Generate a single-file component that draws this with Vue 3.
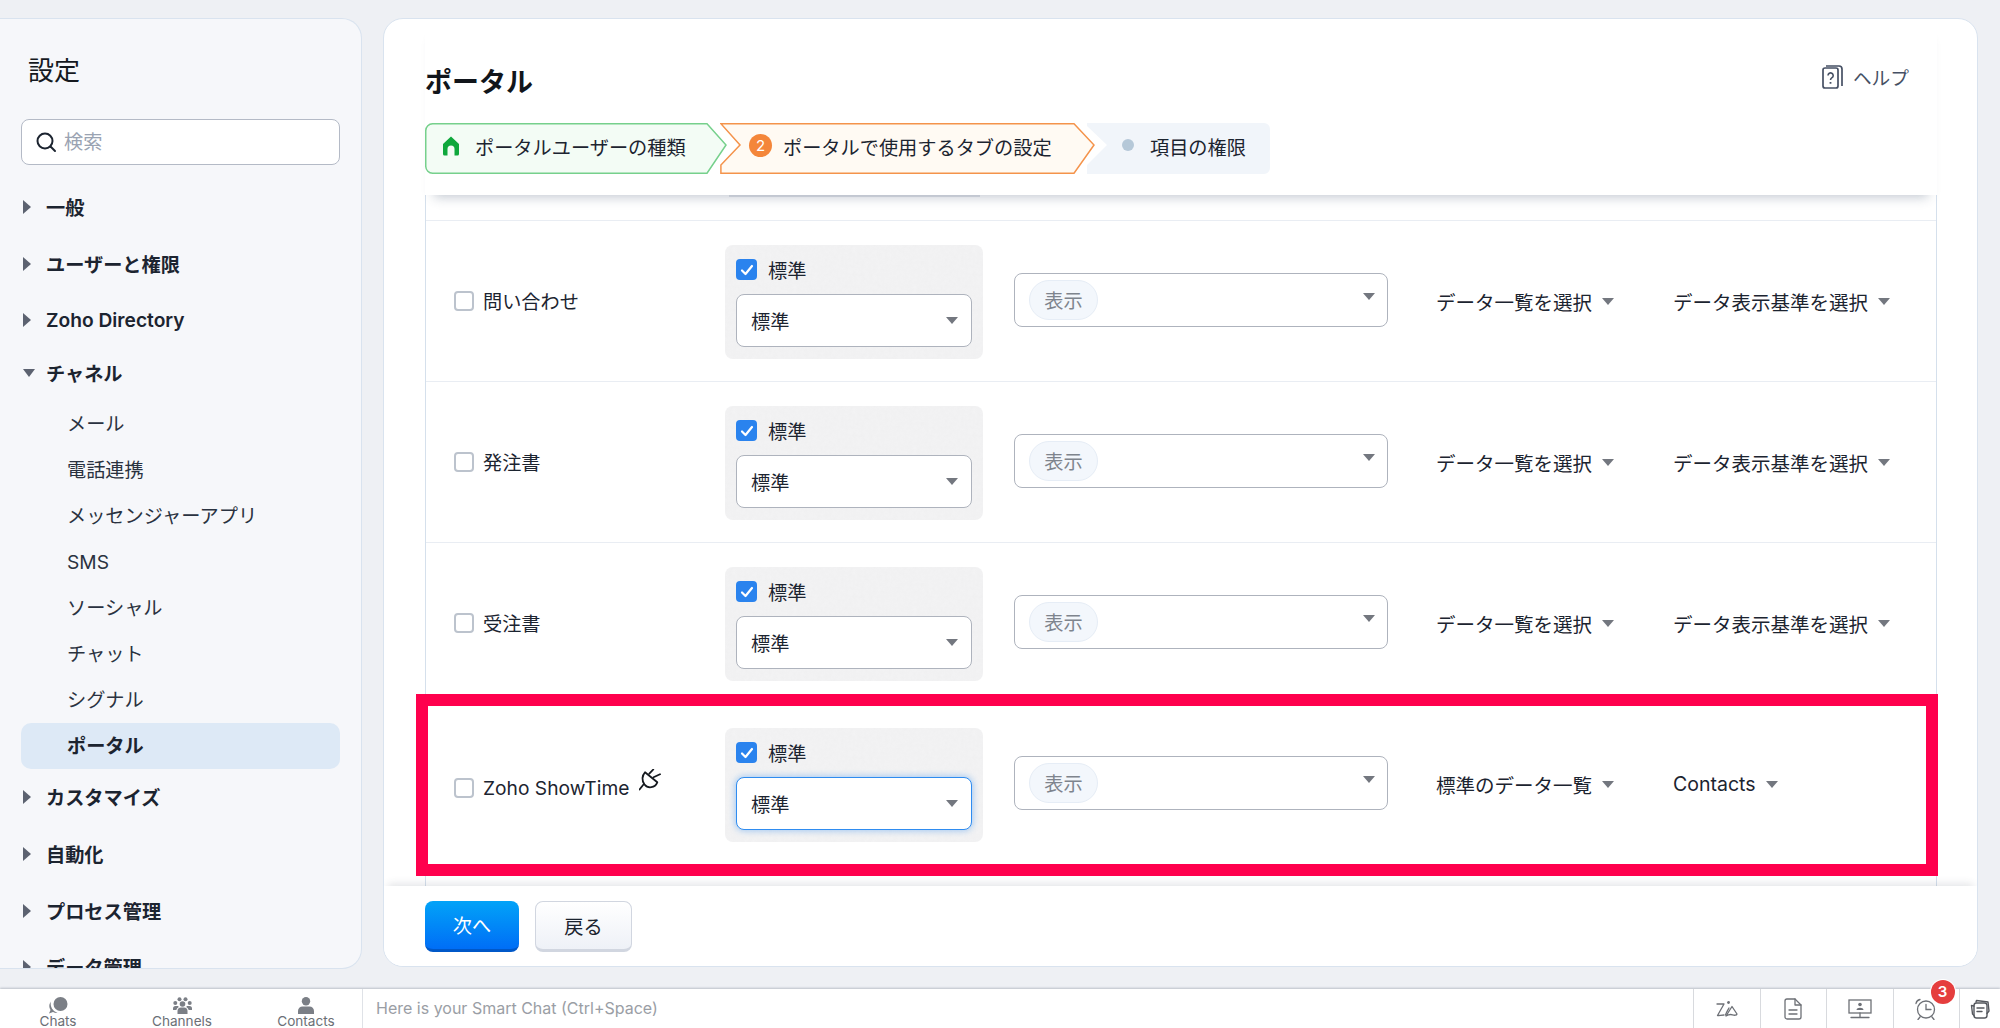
<script setup>
const nav = [
  { label: '一般', mt: 0 },
  { label: 'ユーザーと権限', mt: 1 },
  { label: 'Zoho Directory', mt: 0 },
  { label: 'チャネル', mt: -3, open: true, children: ['メール', '電話連携', 'メッセンジャーアプリ', 'SMS', 'ソーシャル', 'チャット', 'シグナル', 'ポータル'] },
  { label: 'カスタマイズ', mt: -.5 },
  { label: '自動化', mt: 1 },
  { label: 'プロセス管理', mt: 1 },
  { label: 'データ管理', mt: 0 }
]
const rows = [
  { name: '問い合わせ', a: 'データ一覧を選択', b: 'データ表示基準を選択' },
  { name: '発注書', a: 'データ一覧を選択', b: 'データ表示基準を選択' },
  { name: '受注書', a: 'データ一覧を選択', b: 'データ表示基準を選択' },
  { name: 'Zoho ShowTime', a: '標準のデータ一覧', b: 'Contacts', hot: true }
]
</script>

<template>
  <div class="page">
    <div class="work">
      <aside class="side">
        <h2 class="side-title">設定</h2>
        <div class="search">
          <svg width="22" height="22" viewBox="0 0 22 22" fill="none" stroke="#1c2430" stroke-width="2" stroke-linecap="round"><circle cx="10" cy="10" r="7.5"/><path d="M15.5 15.5 20 20"/></svg>
          <span>検索</span>
        </div>
        <nav class="nav">
          <template v-for="s in nav" :key="s.label">
            <div class="sec" :style="{ marginTop: s.mt + 'px' }">
              <i :class="s.open ? 'tri-down' : 'tri-right'"></i>
              <span>{{ s.label }}</span>
            </div>
            <div v-if="s.children" class="kids">
              <div v-for="c in s.children" :key="c" class="kid" :class="{ on: c === 'ポータル' }">{{ c }}</div>
            </div>
          </template>
        </nav>
      </aside>

      <main class="main">
        <header class="head">
          <div class="title-row">
            <h1>ポータル</h1>
            <div class="help">
              <svg width="21" height="24" viewBox="0 0 21 24" fill="none" stroke="#465064" stroke-width="1.7"><rect x="1" y="3" width="15" height="20" rx="2"/><path d="M4 1h13a3 3 0 0 1 3 3v17"/><path d="M6 10.500a2.600 2.600 0 1 1 4 2.200c-1 .7-1.500 1.200-1.500 2.300" stroke-width="1.600"/><path d="M8.500 17v1.800" stroke-width="1.800"/></svg>
              <span>ヘルプ</span>
            </div>
          </div>
          <div class="steps">
            <div class="step s1">
              <svg class="shape" width="303" height="51" viewBox="0 0 303 51"><path d="M8 .75H282L301 22 282 50.250H8A7 7 0 0 1 .75 43V8A7 7 0 0 1 8 .75Z" fill="#f3fcf5" stroke="#76d08c" stroke-width="1.500"/></svg>
              <svg class="home" width="18" height="20" viewBox="0 0 18 20"><path d="M9 .5 17 8v10a1.500 1.500 0 0 1-1.500 1.500H12.500V13a3.500 3.500 0 0 0-7 0v6.500H2.500A1.500 1.500 0 0 1 1 18V8Z" fill="#0fa83c"/></svg>
              <span class="st">ポータルユーザーの種類</span>
            </div>
            <div class="step s2">
              <svg class="shape" width="376" height="51" viewBox="0 0 376 51"><path d="M.9.75H354L374 22 354 50.250H.9V42L20 22Z" fill="#fffaf3" stroke="#f4934b" stroke-width="1.500"/></svg>
              <span class="num">2</span>
              <span class="st">ポータルで使用するタブの設定</span>
            </div>
            <div class="step s3">
              <svg class="shape" width="183" height="51" viewBox="0 0 183 51"><path d="M0 0H177A6 6 0 0 1 183 6V45A6 6 0 0 1 177 51H0V42L20 22 0 3Z" fill="#f1f5fa"/></svg>
              <i class="dot"></i>
              <span class="st">項目の権限</span>
            </div>
          </div>
        </header>

        <div class="scroll">
          <div class="table">
            <div class="stub"><i></i></div>
            <div v-for="r in rows" :key="r.name" class="row" :class="{ hot: r.hot }">
              <div class="c-name">
                <i class="box"></i>
                <span>{{ r.name }}</span>
                <svg v-if="r.hot" class="plug" width="22" height="22" viewBox="-1 0 22 22" fill="none" stroke="#15191f" stroke-width="1.800" stroke-linecap="round" stroke-linejoin="round"><path d="M-.5 20.500 3.500 15.500"/><path d="M5 3.300 17.300 13.300C15 19 8 20 4.500 15.500 1.500 11.500 2 6.500 5 3.300Z"/><path d="M9.300 4.700 13.300.5M13.500 8.300 20 5.300"/></svg>
              </div>
              <div class="perm">
                <label class="std">
                  <i class="chk"><svg width="14" height="12" viewBox="0 0 14 12" fill="none" stroke="#fff" stroke-width="2.200" stroke-linecap="round" stroke-linejoin="round"><path d="M2 6.500 5.500 10 12 2"/></svg></i>
                  <span>標準</span>
                </label>
                <div class="sel" :class="{ focus: r.hot }"><span>標準</span><i class="caret"></i></div>
              </div>
              <div class="multi">
                <span class="chip">表示</span>
                <i class="caret"></i>
              </div>
              <div class="dd da"><span>{{ r.a }}</span><i class="caret"></i></div>
              <div class="dd db"><span>{{ r.b }}</span><i class="caret"></i></div>
              <div v-if="r.hot" class="frame"></div>
            </div>
          </div>
        </div>

        <footer class="foot">
          <button class="btn next">次へ</button>
          <button class="btn back">戻る</button>
        </footer>
      </main>
    </div>

    <div class="bar">
      <div class="tabs">
        <div class="tab">
          <svg width="20" height="17" viewBox="0 0 20 17" fill="#7b7f86"><circle cx="12.500" cy="7" r="7"/><path d="M3 4.500a7.500 7.500 0 0 0-.5 8.500L1 16.500l4-1.500a8 8 0 0 0 4.500 1A9.500 9.500 0 0 1 3 4.500Z"/></svg>
          <span>Chats</span>
        </div>
        <div class="tab">
          <svg width="19" height="17" viewBox="0 0 19 17" fill="#7b7f86"><circle cx="6.500" cy="2.200" r="2"/><circle cx="12.500" cy="2.200" r="2"/><circle cx="2.300" cy="6" r="2"/><circle cx="16.700" cy="6" r="2"/><circle cx="9.500" cy="7" r="2.800"/><path d="M4.500 17v-3a3.500 3.500 0 0 1 3.500-3.500h3a3.500 3.500 0 0 1 3.500 3.500v3ZM0 11.500A2.500 2.500 0 0 1 2.500 9H5l.8 1A5 5 0 0 0 3.300 13H0ZM19 11.500A2.500 2.500 0 0 0 16.500 9H14l-.8 1a5 5 0 0 1 2.500 3H19Z"/></svg>
          <span>Channels</span>
        </div>
        <div class="tab">
          <svg width="16" height="17" viewBox="0 0 16 17" fill="#7b7f86"><circle cx="8" cy="4.200" r="4.200"/><path d="M0 17v-3A4.500 4.500 0 0 1 4.500 9.500h7A4.500 4.500 0 0 1 16 14v3Z"/></svg>
          <span>Contacts</span>
        </div>
      </div>
      <div class="smart">Here is your Smart Chat (Ctrl+Space)</div>
      <div class="tools">
        <div class="tool">
          <svg width="22" height="16" viewBox="0 0 22 16" fill="none" stroke="#6d7076" stroke-width="1.300" stroke-linejoin="round" stroke-linecap="round"><path d="M1 3h7L1.500 14.500c2 0 4-.5 6.500-.5"/><path d="M9.500 14c1-3 2.500-5 3.500-7"/><circle cx="12.500" cy="1.500" r=".8" fill="#6d7076"/><path d="M10 15 16 5.500l5 7.500c-.5 1.500-2.500 1.500-4.500.8-2.500-.8-4.500 0-6.500 1.200Z"/></svg>
        </div>
        <div class="tool">
          <svg width="18" height="22" viewBox="0 0 18 22" fill="none" stroke="#6d7076" stroke-width="1.300" stroke-linejoin="round" stroke-linecap="round"><path d="M3 1h8l6 6v12a2 2 0 0 1-2 2H3a2 2 0 0 1-2-2V3a2 2 0 0 1 2-2Z"/><path d="M11 1v6h6M5 12h8M5 16h8"/></svg>
        </div>
        <div class="tool">
          <svg width="24" height="20" viewBox="0 0 24 20" fill="none" stroke="#6d7076" stroke-width="1.300" stroke-linecap="round"><rect x="1" y="1" width="22" height="13"/><path d="M12 14v4M3 18.500h18"/><circle cx="12" cy="5.500" r="1.800" fill="#6d7076" stroke="none"/><path d="M8.500 11c0-3 7-3 7 0Z" fill="#6d7076" stroke="none"/></svg>
        </div>
        <div class="tool alarm">
          <svg width="22" height="22" viewBox="0 0 22 22" fill="none" stroke="#6d7076" stroke-width="1.300" stroke-linecap="round"><circle cx="11" cy="11.500" r="8.500"/><path d="M11 6.500v5h5M1 5.500A5 5 0 0 1 5 1.500M5 19l-2 2.500M17 19l2 2.500"/></svg>
          <b class="badge">3</b>
        </div>
        <div class="tool last">
          <svg width="20" height="20" viewBox="0 0 20 20" fill="none" stroke="#55585e" stroke-width="1.400" stroke-linecap="round" stroke-linejoin="round"><rect x="4" y="4" width="13" height="15" rx="2.500"/><path d="M4 7 1.500 6.500 2.500 15 4 16.500M6 3l.5-1.500L18 3l1 9-2 2.500M7 9h7M7 12.500h5"/></svg>
        </div>
      </div>
    </div>
  </div>
</template>

<style>
html, body { margin: 0; padding: 0; }
</style>

<style scoped>
.page {
  width: 2000px; height: 1028px; overflow: hidden; display: flex; flex-direction: column;
  background: #eef0f4; color: #1c2430;
  font-family: Inter, "Noto Sans CJK JP", sans-serif; font-size: 19.2px;
}
.work { height: 989px; box-sizing: border-box; padding: 18px 22px 0 0; display: flex; gap: 21px; flex: none; }
.side {
  width: 362px; height: 951px; box-sizing: border-box; flex: none; overflow: hidden;
  background: #f6f7fa; border: 1.500px solid #d9e3ef; border-left: 0; border-radius: 0 20px 20px 0;
  padding: 0 21px;
}
.side-title { margin: 35px 0 0 7px; font-size: 26px; line-height: 34px; font-weight: 400; color: #15191f; }
.search {
  margin-top: 31px; height: 46px; box-sizing: border-box; background: #fff; border: 1.500px solid #b4bac6; border-radius: 8px;
  display: flex; align-items: center; gap: 7px; padding-left: 13px; color: #9aa3b2;
}
.search span { margin-top: -2px; }
.nav { margin-top: 13.500px; margin-left: 2px; }
.sec { height: 56px; display: flex; align-items: center; font-weight: 600; color: #1c2430; position: relative; padding-left: 23px; white-space: nowrap; }
.tri-right { position: absolute; left: 0; top: 50%; margin-top: -7px; width: 0; height: 0; border-left: 8px solid #5c6270; border-top: 7px solid transparent; border-bottom: 7px solid transparent; }
.tri-down { position: absolute; left: 0; top: 50%; margin-top: -4px; width: 0; height: 0; border-top: 8px solid #5c6270; border-left: 6px solid transparent; border-right: 6px solid transparent; }
.kids { margin: .5px 0 0 -2px; }
.kid { height: 46px; line-height: 46px; padding-left: 46px; border-radius: 10px; color: #2a3240; }
.kid.on { background: #dde9f6; font-weight: 600; color: #1c2430; }

.main {
  flex: 1; height: 949px; box-sizing: border-box; background: #fff; border: 1.500px solid #d9e3ef; border-radius: 20px;
  display: flex; flex-direction: column; overflow: hidden; min-width: 0;
}
.head {
  flex: none; height: 176px; margin: 0 40px 0 41px; box-sizing: border-box; padding-top: 42px; background: #fff;
  position: relative; z-index: 2; box-shadow: 0 11px 11px -9px rgba(50, 70, 100, .3);
}
.title-row { display: flex; justify-content: space-between; align-items: flex-start; height: 62px; }
h1 { margin: 0; font-size: 27px; line-height: 44px; font-weight: 700; color: #11151b; }
.help { display: flex; align-items: center; gap: 10px; margin: 2px 28px 0 0; color: #465064; font-size: 18.700px; }
.help svg { flex: none; }
.steps { display: flex; height: 51px; }
.step { position: relative; height: 51px; display: flex; align-items: center; flex: none; }
.shape { position: absolute; left: 0; top: 0; }
.s1 { width: 303px; }
.s2 { width: 376px; margin-left: -8px; }
.s3 { width: 183px; margin-left: -9px; }
.st { position: relative; white-space: nowrap; line-height: 53px; }
.home { position: absolute; left: 17px; top: 13px; }
.s1 .st { margin-left: 50px; }
.num { position: absolute; left: 29px; top: 11px; width: 23px; height: 23px; border-radius: 50%; background: #f4863a; color: #fff; font-size: 15px; line-height: 23px; text-align: center; }
.s2 .st { margin-left: 63px; }
.dot { position: absolute; left: 35px; top: 16px; width: 12px; height: 12px; border-radius: 50%; background: #b5c8d8; }
.s3 .st { margin-left: 63px; }

.scroll { flex: 1; min-height: 0; overflow: hidden; padding: 0 40px 0 41px; position: relative; }
.table { border-left: 1.500px solid #d5e0ec; border-right: 1.500px solid #d5e0ec; height: 100%; box-sizing: border-box; }
.stub { height: 25px; border-bottom: 1.500px solid #e9edf3; position: relative; }
.stub i { display: block; position: absolute; left: 303px; top: 0; width: 251px; height: 2px; background: #e2e4e9; }
.row {
  position: relative; height: 161px; box-sizing: border-box; border-bottom: 1.500px solid #e9edf3;
  display: flex; align-items: center;
}
.c-name { width: 299px; flex: none; padding-left: 28px; box-sizing: border-box; display: flex; align-items: center; gap: 9px; margin-top: .5px; position: relative; white-space: nowrap; }
.hot .c-name { margin-top: 8.500px; }
.box { width: 20px; height: 20px; box-sizing: border-box; border: 2.500px solid #bcc3cd; border-radius: 4px; background: #fff; flex: none; }
.plug { position: absolute; left: 213px; top: -7px; }
.perm {
  width: 258px; height: 114px; flex: none; box-sizing: border-box; border-radius: 8px; padding: 14px 11px 0 11px; margin-top: 2px;
  background-color: #f3f3f4;
  background-image: url("data:image/svg+xml,%3Csvg xmlns='http://www.w3.org/2000/svg' width='120' height='120'%3E%3Cfilter id='n'%3E%3CfeTurbulence type='fractalNoise' baseFrequency='.25' numOctaves='2'/%3E%3CfeColorMatrix values='0 0 0 0 .5 0 0 0 0 .5 0 0 0 0 .5 0 0 0 .05 0'/%3E%3C/filter%3E%3Crect width='120' height='120' filter='url(%23n)'/%3E%3C/svg%3E");
}
.std { display: flex; align-items: center; gap: 11px; height: 21px; }
.chk { width: 21px; height: 21px; border-radius: 4px; background: #2a83ee; display: flex; align-items: center; justify-content: center; }
.sel {
  margin-top: 14px; width: 236px; height: 53px; box-sizing: border-box; background: #fff; border: 1.500px solid #aeb3bd; border-radius: 8px;
  display: flex; align-items: center; justify-content: space-between; padding: 0 13px 0 14px;
}
.sel.focus { border-color: #2f8cf0; box-shadow: 0 0 6px 1px rgba(47, 140, 240, .4); }
.caret { width: 0; height: 0; border-top: 7px solid #73777f; border-left: 6.500px solid transparent; border-right: 6.500px solid transparent; display: block; flex: none; }
.multi {
  width: 374px; height: 54px; flex: none; box-sizing: border-box; margin-left: 31px; background: #fff; border: 1.500px solid #aeb3bd; border-radius: 8px;
  display: flex; align-items: center; justify-content: space-between; padding: 0 12px 0 14px; margin-top: -1.500px;
}
.multi .caret { margin-top: -8px; }
.chip { width: 69px; height: 40px; line-height: 41px; box-sizing: border-box; border: 1px solid #e6edf6; border-radius: 20px; background: #f3f7fc; text-align: center; color: #7e848d; }
.dd { display: flex; align-items: center; gap: 10px; flex: none; margin-top: 0; white-space: nowrap; font-size: 19.500px; }
.da { width: 237px; margin-left: 48px; }
.frame { position: absolute; left: -10px; right: -1.500px; top: -10px; bottom: -12px; border: 12px solid #ff004d; box-sizing: border-box; pointer-events: none; z-index: 1; }

.foot {
  flex: none; height: 80px; box-sizing: border-box; background: #fff; padding: 15px 41px 0; display: flex; gap: 16px; align-items: flex-start;
  position: relative; z-index: 2; box-shadow: 0 -6px 8px -4px rgba(50, 60, 80, .14);
}
.btn { height: 51px; box-sizing: border-box; border-radius: 8px; font: inherit; padding: 0; }
.next { width: 94px; color: #fff; border: 0; border-bottom: 3px solid #0058c8; background: linear-gradient(#02a3f8, #006ef6); }
.back { width: 97px; color: #1c2430; border: 1.500px solid #d1d6e0; border-bottom-width: 3px; background: linear-gradient(#fff, #eef1f7); }

.bar { flex: 1; background: #fff; display: flex; box-shadow: 0 -1px 2px rgba(70, 80, 100, .3); position: relative; z-index: 3; min-height: 0; }
.tabs { width: 362px; flex: none; display: flex; overflow: hidden; }
.tab { width: 124px; flex: none; display: flex; flex-direction: column; align-items: center; padding-top: 8px; font-size: 13.600px; color: #6b6f76; line-height: 18px; }
.tab:first-child { margin-left: -4px; }
.tab svg { flex: none; }
.tab span { margin-top: -2px; }
.smart { flex: 1; border-left: 1.500px solid #dfe2e7; padding-left: 13px; font-size: 16px; line-height: 38px; color: #9a9ea5; white-space: nowrap; }
.tools { display: flex; }
.tool { width: 66.500px; box-sizing: border-box; border-left: 1.500px solid #d8dade; display: flex; align-items: center; justify-content: center; position: relative; }
.tool.last { width: 41px; }
.badge { position: absolute; left: 37px; top: -9px; width: 24px; height: 24px; border-radius: 50%; background: #e53e3e; color: #fff; font-size: 15px; line-height: 24px; text-align: center; font-weight: 600; box-shadow: 0 0 0 1px #fff; }
</style>
